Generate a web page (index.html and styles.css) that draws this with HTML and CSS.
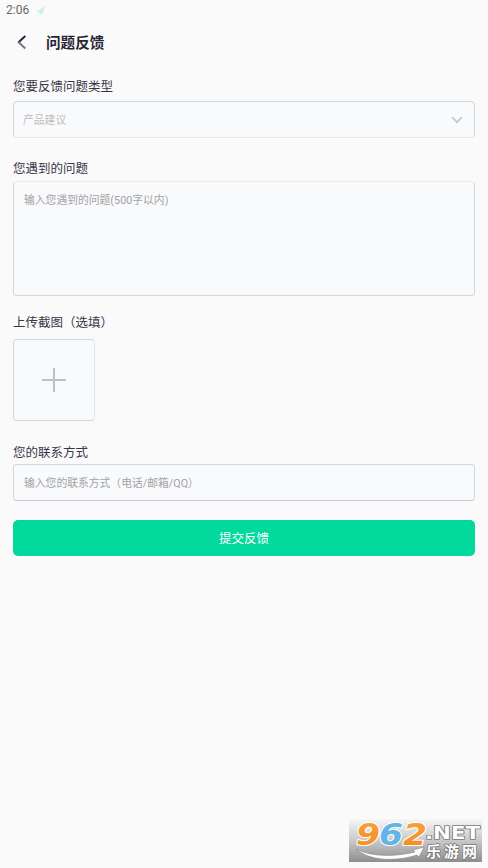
FILE: index.html
```html
<!DOCTYPE html>
<html lang="zh-CN">
<head>
<meta charset="utf-8">
<title>问题反馈</title>
<link rel="stylesheet" href="styles.css">
</head>
<body>
<div class="status">
  <span>2:06</span>
  <svg class="status-icon" width="11" height="10" viewBox="0 0 11 10"><path d="M0 5l4 .5L10.500 0 8 8 5 10 3.500 7z" fill="#c9f3e4"/></svg>
</div>
<header class="header">
  <svg width="10" height="16" viewBox="0 0 10 16" fill="none" stroke-width="2"><path d="M8.300 1L1.300 7.500" stroke="#292638"/><path d="M1.300 7L8.300 13.500" stroke="#777580"/></svg>
  <h1>问题反馈</h1>
</header>
<main class="form">
  <label class="label">您要反馈问题类型</label>
  <div class="field select"><span>产品建议</span>
    <svg width="12" height="8" viewBox="0 0 12 8" fill="none" stroke="#c0c9d4" stroke-width="1.800"><path d="M1 1.200L6 6.200 11 1.200"/></svg>
  </div>
  <label class="label problem-label">您遇到的问题</label>
  <div class="field problem">输入您遇到的问题(500字以内)</div>
  <label class="label upload-label">上传截图（选填）</label>
  <div class="field upload">
    <svg width="24" height="24" viewBox="0 0 24 24" stroke="#bfc0c2" stroke-width="2"><path d="M12 0v24M0 12h24"/></svg>
  </div>
  <label class="label contact-label">您的联系方式</label>
  <div class="field contact">输入您的联系方式（电话/邮箱/QQ）</div>
  <button class="submit">提交反馈</button>
</main>
<svg class="watermark" width="133" height="43" viewBox="0 0 133 43">
  <defs>
    <linearGradient id="shade" x2="0" y2="1"><stop stop-color="#f6f6f6"/><stop offset=".5" stop-color="#c9c9c9"/><stop offset="1" stop-color="#8e8e8e"/></linearGradient>
    <linearGradient id="orange" x2="0" y2="1"><stop stop-color="#f6a43c"/><stop offset="1" stop-color="#f58a1f"/></linearGradient>
  </defs>
  <rect width="133" height="43" fill="url(#shade)"/>
  <path d="M7 30C23 38 45 38 66 33l-2-2 11-3-5 10-2-2C46 43 21 42 7 30z" fill="#fff" stroke="#888" stroke-width=".6"/>
  <g class="digits">
    <text x="7" y="26" textLength="24" lengthAdjust="spacingAndGlyphs" fill="url(#orange)">9</text>
    <text x="30" y="26" textLength="24" lengthAdjust="spacingAndGlyphs" fill="#64b5e5">6</text>
    <text x="54" y="26" textLength="24" lengthAdjust="spacingAndGlyphs" fill="url(#orange)">2</text>
  </g>
  <text class="net" x="76" y="20" textLength="55" lengthAdjust="spacingAndGlyphs">.NET</text>
  <text class="site" x="77" y="38" textLength="51">乐游网</text>
</svg>
</body>
</html>
```

FILE: styles.css
```css
* { box-sizing: border-box; }
body {
  margin: 0;
  min-height: 868px;
  background: #fafafa;
  color: #393646;
  font-family: Roboto, "Noto Sans CJK SC", sans-serif;
}
.status {
  display: flex;
  align-items: center;
  gap: 6px;
  height: 20px;
  padding-left: 6px;
  color: #666;
  font-size: 12px;
}
.header {
  display: flex;
  align-items: center;
  gap: 19px;
  height: 45px;
  padding-left: 17px;
}
h1 {
  margin: 1px 0 0;
  color: #292638;
  font-size: 14.6px;
  line-height: 22px;
  font-weight: 700;
}
.form {
  display: flex;
  flex-direction: column;
  padding: 12px 13px 0;
}
.label {
  height: 20px;
  font-size: 12.5px;
  line-height: 20px;
}
.field {
  border: 1px solid #d0d9e2;
  border-radius: 4px;
  background: #f9fafc;
  color: #a3a3a3;
  font-size: 10.8px;
  line-height: 18px;
}
.select {
  display: flex;
  align-items: center;
  justify-content: space-between;
  height: 37px;
  margin-top: 4px;
  padding: 0 11px 0 9px;
  border-bottom-color: #e4e9ed;
  color: #bfbfbf;
}
.select span { margin-top: 2px; }
.problem-label { margin-top: 21px; }
.problem {
  height: 115px;
  margin-top: 2px;
  padding: 10px;
  border-top-color: #e8ecf0;
}
.upload-label { margin-top: 17px; }
.upload {
  display: flex;
  align-items: center;
  justify-content: center;
  width: 82px;
  height: 82px;
  margin-top: 6px;
  border-right-color: #e0e7ec;
}
.contact-label { margin-top: 21px; line-height: 21px; }
.contact {
  height: 37px;
  margin-top: 2px;
  padding: 10px 10px 8px;
  border-bottom-color: #c0cada;
}
.submit {
  height: 36px;
  margin-top: 19px;
  padding: 0;
  border: 0;
  border-radius: 5px;
  background: #02d99d;
  color: #fff;
  font: 12.5px/37px Roboto, "Noto Sans CJK SC", sans-serif;
}
.watermark {
  position: absolute;
  left: 349px;
  top: 819px;
}
.watermark text { paint-order: stroke; stroke-linejoin: round; }
.digits {
  font: italic 700 31px "DejaVu Sans", sans-serif;
  stroke: #fff;
  stroke-width: 2px;
}
.net, .site {
  fill: #fff;
  stroke: #777;
  stroke-width: 1.5px;
}
.net { font: 700 17px "DejaVu Sans", sans-serif; }
.site { font: 700 15px/1 "Noto Sans CJK SC", sans-serif; }
```
